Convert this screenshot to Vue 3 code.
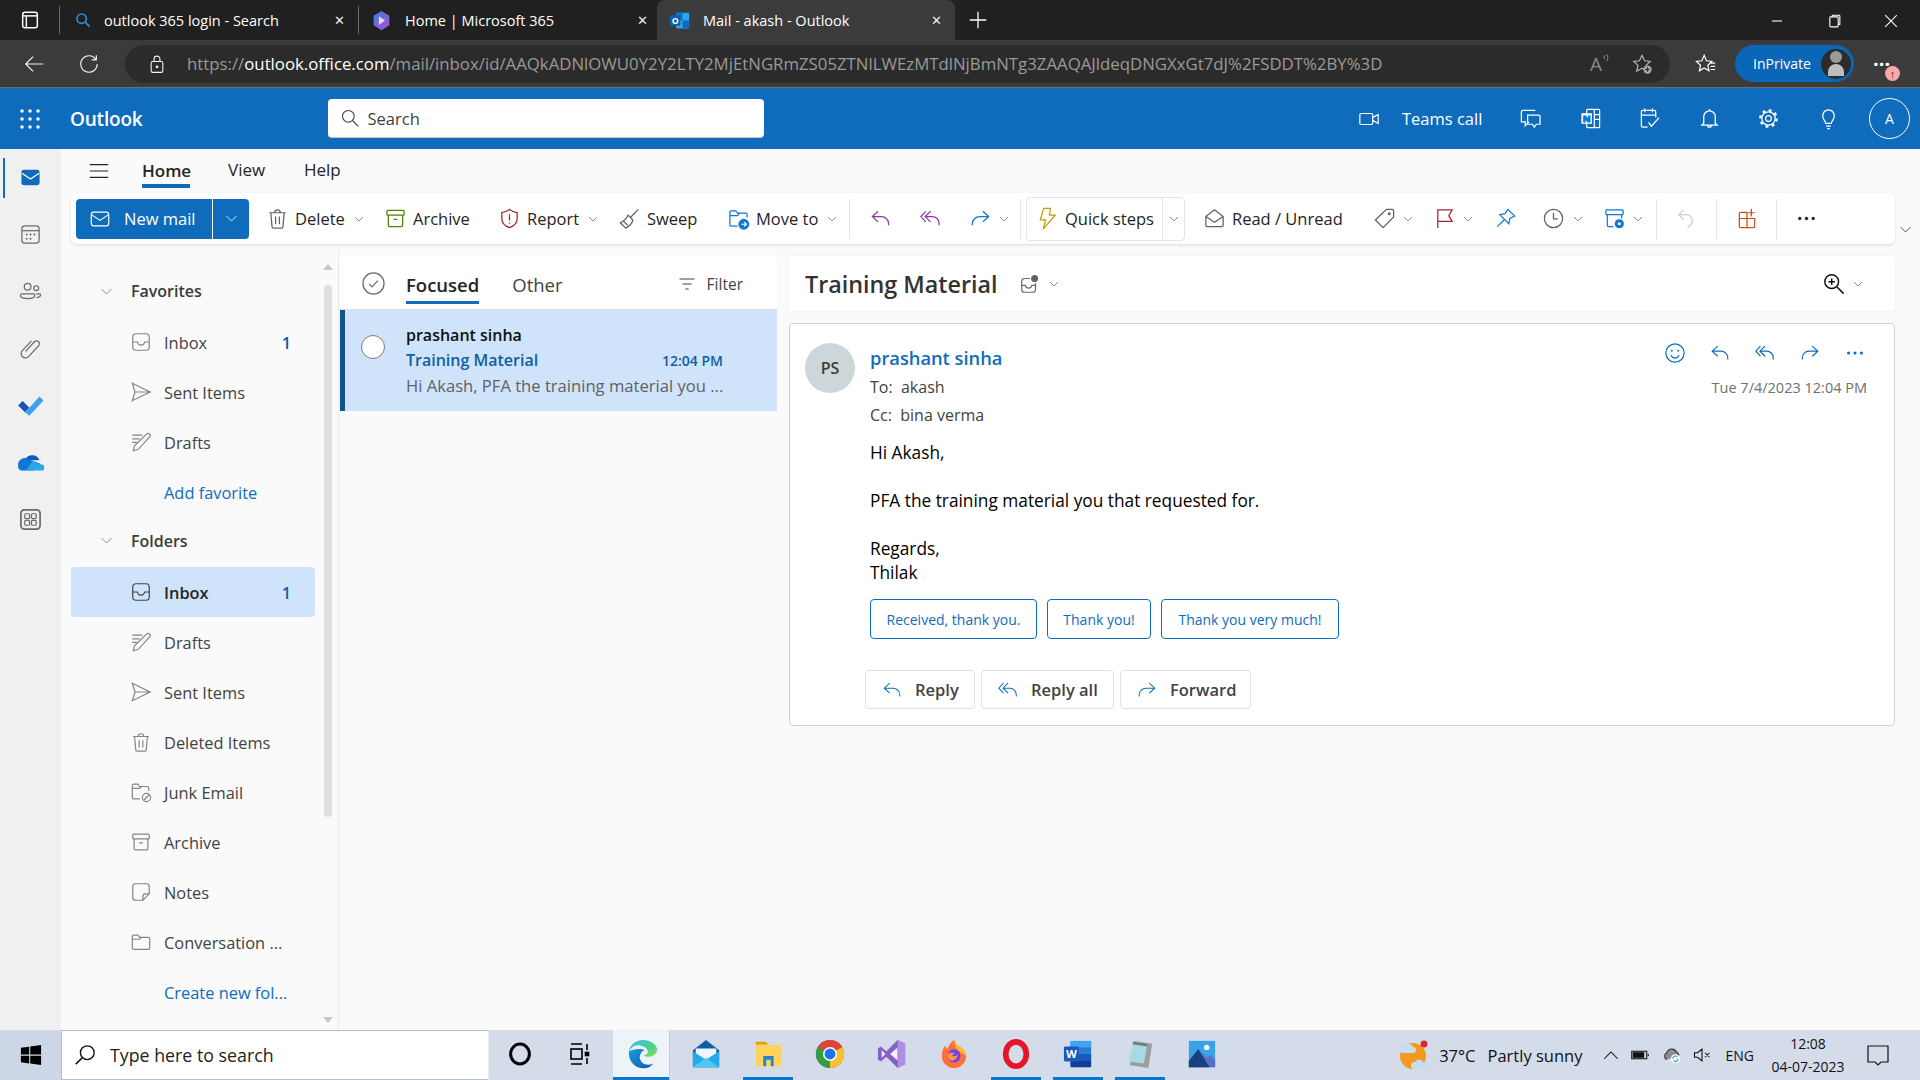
<template>
  <div class="desktop">
    <!-- shared icon sprite -->
    <svg class="sprite" aria-hidden="true">
      <symbol id="chev" viewBox="0 0 24 24"><path d="M4 8l8 8 8-8"/></symbol>
      <symbol id="reply" viewBox="0 0 24 24"><path d="M9.500 4.500L3.500 10l6 5.500M3.500 10H13a7.500 7.500 0 0 1 7.500 7.500v1.500"/></symbol>
      <symbol id="replyall" viewBox="0 0 24 24"><path d="M7 4.500L2 10l5 5.500M12 4.500L6.500 10l5.500 5.500M6.500 10H14a7 7 0 0 1 7 7v2"/></symbol>
      <symbol id="forward" viewBox="0 0 24 24"><path d="M14.500 4.500l6 5.500-6 5.500M20.500 10H11a7.500 7.500 0 0 0-7.500 7.500v1.500"/></symbol>
      <symbol id="mail" viewBox="0 0 24 24"><rect x="2.500" y="4.500" width="19" height="15" rx="2.500"/><path d="M3 7.500l9 6 9-6"/></symbol>
      <symbol id="trash" viewBox="0 0 24 24"><path d="M3.500 6h17M9 6a3 3 0 0 1 6 0M5 6l1.300 14.500A1.500 1.500 0 0 0 7.800 22h8.400a1.500 1.500 0 0 0 1.500-1.500L19 6M10 10v8M14 10v8"/></symbol>
      <symbol id="archive" viewBox="0 0 24 24"><rect x="3" y="3.500" width="18" height="5" rx="1"/><path d="M4.500 8.500V19A1.500 1.500 0 0 0 6 20.500h12a1.500 1.500 0 0 0 1.500-1.500V8.500M10 13h4"/></symbol>
      <symbol id="shield" viewBox="0 0 24 24"><path d="M12 2.500C9.500 4.800 7 5.500 4 5.800V12c0 5 3.500 8 8 9.500 4.500-1.500 8-4.500 8-9.500V5.800c-3-.3-5.500-1-8-3.300zM12 7.500v6.500M12 16.300v1.200"/></symbol>
      <symbol id="broom" viewBox="0 0 24 24"><path d="M21 2.500l-8 8.500M10.500 8.500l5 5c-.5 3-3.500 6.500-7.500 8.500l-5.500-5.500c3.500-2 6.500-4.500 8-8zM6 15l4 4"/></symbol>
      <symbol id="bolt" viewBox="0 0 24 24"><path d="M15 1.500H8L4.500 13.500H10L7.500 23 20 8.500h-6z"/></symbol>
      <symbol id="envopen" viewBox="0 0 24 24"><path d="M3 10l9-7 9 7v9a1.500 1.500 0 0 1-1.500 1.500h-15A1.500 1.500 0 0 1 3 19zM3 10l9 6 9-6"/></symbol>
      <symbol id="tag" viewBox="0 0 24 24"><path d="M14 2.500h6a1.500 1.500 0 0 1 1.500 1.500v6.500L10.500 21.500 2.500 13.500z"/><circle cx="17" cy="7" r="1"/></symbol>
      <symbol id="flag" viewBox="0 0 24 24"><path d="M5 22V3h15l-3.500 6 3.500 6H5"/></symbol>
      <symbol id="pin" viewBox="0 0 24 24"><path d="M14.500 2.500l7 7-5 2.500-1 5.500-9.500-9.500 5.500-1zM10.500 13.500L3.500 20.500"/></symbol>
      <symbol id="clock" viewBox="0 0 24 24"><circle cx="12" cy="12" r="9.500"/><path d="M12 6v6.500h4.500"/></symbol>
      <symbol id="undo" viewBox="0 0 24 24"><path d="M9 3L4 8l5 5M4 8h8a6 6 0 0 1 6 6c0 3-2 5.500-5 7.500"/></symbol>
      <symbol id="apps" viewBox="0 0 24 24"><path d="M12 5.500H5A1.500 1.500 0 0 0 3.500 7v13A1.500 1.500 0 0 0 5 21.500h13a1.500 1.500 0 0 0 1.500-1.500v-8H3.500M11.500 5.500v16M16 2v8M12.500 6h7"/></symbol>
      <symbol id="dots" viewBox="0 0 24 24"><circle cx="5" cy="12" r="1.700" class="solid"/><circle cx="12" cy="12" r="1.700" class="solid"/><circle cx="19" cy="12" r="1.700" class="solid"/></symbol>
      <symbol id="smile" viewBox="0 0 24 24"><circle cx="12" cy="12" r="10"/><path d="M7.500 14.500c1 2 2.700 3 4.500 3s3.500-1 4.500-3"/><circle cx="8.500" cy="9.500" r="1" class="solid"/><circle cx="15.500" cy="9.500" r="1" class="solid"/></symbol>
      <symbol id="inbox" viewBox="0 0 24 24"><rect x="3" y="3" width="18" height="18" rx="3.500"/><path d="M3 12h5c.5 2.500 2 3.500 4 3.500s3.500-1 4-3.500h5"/></symbol>
      <symbol id="send" viewBox="0 0 24 24"><path d="M2.500 2.500L22 12 2.500 21.500 5.500 12zM5.500 12H22"/></symbol>
      <symbol id="draft" viewBox="0 0 24 24"><path d="M2.500 4.500h11M2.500 8.500h8M2.500 12.500h5M18 3.500a2.300 2.300 0 0 1 3.500 3L9 20l-5.500 1.500L5 16z"/></symbol>
      <symbol id="junk" viewBox="0 0 24 24"><path d="M11 19.500H4A1.500 1.500 0 0 1 2.500 18V5A1.500 1.500 0 0 1 4 3.500h4.500l2 2.500H19A1.500 1.500 0 0 1 20.500 7.500V11M2.500 8h8l2-2"/><circle cx="18" cy="18" r="4.500"/><path d="M15 21l6-6"/></symbol>
      <symbol id="note" viewBox="0 0 24 24"><path d="M21 14V6a3 3 0 0 0-3-3H6a3 3 0 0 0-3 3v12a3 3 0 0 0 3 3h8zM14 21v-4a3 3 0 0 1 3-3h4"/></symbol>
      <symbol id="folder" viewBox="0 0 24 24"><path d="M2.500 8V6A1.500 1.500 0 0 1 4 4.500h4.500l2 2.500H20A1.500 1.500 0 0 1 21.500 8.500V18.500A1.500 1.500 0 0 1 20 20H4A1.500 1.500 0 0 1 2.500 18.500zM2.500 9h8l2-2"/></symbol>
      <symbol id="search" viewBox="0 0 24 24"><circle cx="10" cy="10" r="7"/><path d="M15 15l7 7"/></symbol>
      <symbol id="people" viewBox="0 0 24 24"><circle cx="9" cy="7" r="3.500"/><circle cx="18" cy="8.500" r="2.500"/><path d="M3 14.500h12a1.500 1.500 0 0 1 1.500 1.500c0 2.500-3 3.500-7.500 3.500S1.500 18.500 1.500 16A1.500 1.500 0 0 1 3 14.500zM18 14.500h3.500a1 1 0 0 1 1 1c0 1.800-1.800 2.800-4.500 2.800"/></symbol>
      <symbol id="clip" viewBox="0 0 24 24"><path d="M7 15l9-10a3 3 0 0 1 4.500 4L10 20.500a4.500 4.500 0 0 1-6.500-6.300L13 4"/></symbol>
      <symbol id="cal" viewBox="0 0 24 24"><rect x="3" y="3" width="18" height="18" rx="3"/><path d="M3 8h18"/><g class="solid"><circle cx="8" cy="12" r="1"/><circle cx="12" cy="12" r="1"/><circle cx="16" cy="12" r="1"/><circle cx="8" cy="16.500" r="1"/><circle cx="12" cy="16.500" r="1"/></g></symbol>
      <symbol id="video" viewBox="0 0 24 24"><rect x="2" y="6" width="14" height="12" rx="1.500"/><path d="M16 10.500l6-3.500v10l-6-3.500"/></symbol>
      <symbol id="chat" viewBox="0 0 24 24"><path d="M17 3.500H4A1.500 1.500 0 0 0 2.500 5v10.500h4v4l4-4M9 8.500h11.500A1.500 1.500 0 0 1 22 10v8h-4l-2 3-2-3H9z"/></symbol>
      <symbol id="plan" viewBox="0 0 24 24"><path d="M10 21H5A1.500 1.500 0 0 1 3.500 19.500V5A1.500 1.500 0 0 1 5 3.500h12A1.500 1.500 0 0 1 18.500 5v6M3.500 8.500h15M7 1.500v4M15 1.500v4M11 16l3 4 8-9"/></symbol>
      <symbol id="bell" viewBox="0 0 24 24"><path d="M6 10a6 6 0 0 1 12 0v7l2 2H4l2-2zM10 19a2 2 0 0 0 4 0M12 2v2"/></symbol>
      <symbol id="gear" viewBox="0 0 24 24"><circle cx="12" cy="12" r="8.500" class="teeth"/><circle cx="12" cy="12" r="7"/><circle cx="12" cy="12" r="3"/></symbol>
      <symbol id="bulb" viewBox="0 0 24 24"><path d="M9 17c0-2.500-3-3.500-3-8a6 6 0 0 1 12 0c0 4.500-3 5.500-3 8zM9.500 20h5M10.500 22.500h3"/></symbol>
    </svg>

    <div class="tabstrip">
      <svg class="ic panel" viewBox="0 0 24 24"><rect x="4" y="3.500" width="16" height="17" rx="2.500"/><path d="M4 7.500h16" /><path d="M8 7.500v13"/></svg>
      <span class="tab-sep"></span>
      <div class="tab first">
        <svg class="ic bing" viewBox="0 0 24 24"><use href="#search"/></svg>
        <span class="tab-title">outlook 365 login - Search</span>
        <span class="tab-x">✕</span>
      </div>
      <span class="tab-sep short"></span>
      <div class="tab second">
        <svg class="tab-logo" viewBox="0 0 24 24"><defs><linearGradient id="m365" x1="0" y1="0" x2="1" y2="1"><stop offset="0" stop-color="#3a7fe0"/><stop offset="1" stop-color="#b04fd0"/></linearGradient></defs><path d="M12 1l9 5.500v11L12 23l-9-5.500v-11z" fill="url(#m365)"/><path d="M9 7l7 5-7 5z" fill="#e7d9f7"/></svg>
        <span class="tab-title">Home | Microsoft 365</span>
        <span class="tab-x">✕</span>
      </div>
      <div class="tab active">
        <svg class="tab-logo" viewBox="0 0 24 24"><rect x="8" y="3" width="15" height="18" rx="1.500" fill="#28a8ea"/><rect x="8" y="3" width="7.500" height="9" fill="#0078d4"/><rect x="15.500" y="12" width="7.500" height="9" fill="#0f6cbd"/><rect x="1" y="6" width="12" height="12" rx="1.500" fill="#0f5fa8"/><text x="7" y="15.500" class="svg-letter" font-size="10">O</text></svg>
        <span class="tab-title">Mail - akash - Outlook</span>
        <span class="tab-x">✕</span>
      </div>
      <svg class="ic newtab" viewBox="0 0 24 24"><path d="M12 3v18M3 12h18"/></svg>
      <div class="winctl">
        <svg class="ic" viewBox="0 0 24 24"><path d="M6 12h12"/></svg>
        <svg class="ic" viewBox="0 0 24 24"><rect x="7" y="7" width="10" height="12" rx="1"/><path d="M10 7V5h8a1 1 0 0 1 1 1v10h-2"/></svg>
        <svg class="ic" viewBox="0 0 24 24"><path d="M5 5l14 14M19 5L5 19"/></svg>
      </div>
    </div>

    <div class="addressbar">
      <svg class="ic back" viewBox="0 0 24 24"><path d="M11 4l-8 8 8 8M3 12h19"/></svg>
      <svg class="ic reload" viewBox="0 0 24 24"><path d="M19.500 7A9 9 0 1 0 21 12M20 2.500V7.500H15"/></svg>
      <div class="urlpill">
        <svg class="ic lock" viewBox="0 0 24 24"><rect x="5" y="9" width="14" height="13" rx="2"/><path d="M8.500 9V6a3.500 3.500 0 0 1 7 0v3"/><circle cx="12" cy="15.500" r="1" fill="currentColor"/></svg>
        <span class="url"><span>https://</span><b>outlook.office.com</b><span>/mail/inbox/id/AAQkADNlOWU0Y2Y2LTY2MjEtNGRmZS05ZTNlLWEzMTdlNjBmNTg3ZAAQAJldeqDNGXxGt7dJ%2FSDDT%2BY%3D</span></span>
        <span class="aloud">A<svg class="aloud-waves" viewBox="0 0 10 12"><path d="M2 6c1-1 1-3 0-4M5 8c2-2 2-5 0-7"/></svg></span>
        <svg class="ic staradd" viewBox="0 0 24 24"><path d="M12 2.500l2.800 6 6.200.7-4.600 4.300 1.300 6.300-5.700-3.200-5.700 3.200 1.300-6.300L3 9.200l6.200-.7z"/><circle cx="18" cy="18" r="4.500" fill="#aaa" stroke="none"/><path d="M18 15.500v5M15.500 18h5" stroke="#2b2b2b"/></svg>
      </div>
      <svg class="ic favs" viewBox="0 0 24 24"><path d="M10 2.500l2.500 6 6 .7-4.500 4.100 1.200 6.200-5.200-3.100-5.200 3.100L6 13.300 1.500 9.200l6-.7zM17 11h5M17 14.500h5M17 18h5"/></svg>
      <div class="inprivate">
        <span>InPrivate</span>
        <span class="inprivate-pic"><i></i><i></i></span>
      </div>
      <div class="more-wrap">
        <span class="more-dots">···</span>
        <span class="update-dot">↑</span>
      </div>
    </div>

    <header class="o-header">
      <svg class="waffle" viewBox="0 0 20 20"><g fill="#fff"><circle v-for="p in wafflePts" :key="p[0] + '-' + p[1]" :cx="p[0]" :cy="p[1]" r="1.700"/></g></svg>
      <span class="brand">Outlook</span>
      <div class="searchbox">
        <svg class="ic" viewBox="0 0 24 24"><use href="#search"/></svg>
        <span>Search</span>
      </div>
      <div class="hdr-right">
        <svg class="ic" viewBox="0 0 24 24"><use href="#video"/></svg>
        <span class="teams">Teams call</span>
        <div class="hdr-cell"><svg class="ic" viewBox="0 0 24 24"><use href="#chat"/></svg></div>
        <div class="hdr-cell">
          <svg class="ic" viewBox="0 0 24 24"><rect x="8" y="2.500" width="13.500" height="19" rx="1"/><path d="M16 2.500v19M16 8h5.500M16 13h5.500"/><rect x="2.500" y="6.500" width="11" height="11" fill="#fff" stroke="none"/><text x="8" y="15.500" class="svg-letter blue" font-size="10">N</text></svg>
        </div>
        <div class="hdr-cell"><svg class="ic" viewBox="0 0 24 24"><use href="#plan"/></svg></div>
        <div class="hdr-cell"><svg class="ic" viewBox="0 0 24 24"><use href="#bell"/></svg></div>
        <div class="hdr-cell"><svg class="ic" viewBox="0 0 24 24"><use href="#gear"/></svg></div>
        <div class="hdr-cell"><svg class="ic" viewBox="0 0 24 24"><use href="#bulb"/></svg></div>
        <div class="me">A</div>
      </div>
    </header>

    <div class="o-main">
      <nav class="rail">
        <div class="rail-item current">
          <svg viewBox="0 0 24 24"><rect x="2.500" y="4" width="19" height="16" rx="2.500" fill="#0f6cbd"/><path d="M3 7.500l9 6 9-6" fill="none" stroke="#fff" stroke-width="1.400"/></svg>
        </div>
        <div class="rail-item"><svg class="ic" viewBox="0 0 24 24"><use href="#cal"/></svg></div>
        <div class="rail-item"><svg class="ic" viewBox="0 0 24 24"><use href="#people"/></svg></div>
        <div class="rail-item"><svg class="ic" viewBox="0 0 24 24"><use href="#clip"/></svg></div>
        <div class="rail-item big">
          <svg viewBox="0 0 24 24"><path d="M1 12l4-4 6 6-4 4z" fill="#1c52b8"/><path d="M7 18l4-4 9-10 3.500 3.500L11 21z" fill="#3f9ff0"/></svg>
        </div>
        <div class="rail-item big">
          <svg viewBox="0 0 24 24"><path d="M7 10a7 7 0 0 1 13 0z" fill="#0a5cb8"/><path d="M1 15a6 6 0 0 1 9-6l11 4-6 6H4a4 4 0 0 1-3-4z" fill="#0f78d4"/><path d="M8 19h13.500a2.500 2.500 0 0 0 1-5l-9-3z" fill="#28a8ea"/></svg>
        </div>
        <div class="rail-item">
          <svg class="ic" viewBox="0 0 24 24"><rect x="2" y="2" width="20" height="20" rx="3.500" stroke-width="1.800"/><rect x="6" y="6" width="5" height="5" rx="1"/><rect x="13" y="6" width="5" height="5" rx="1"/><rect x="6" y="13" width="5" height="5" rx="1"/><rect x="13" y="13" width="5" height="5" rx="1"/></svg>
        </div>
      </nav>

      <div class="content">
        <div class="ribbon-tabs">
          <svg class="ic menu" viewBox="0 0 24 24"><path d="M2 5h20M2 12h20M2 19h20"/></svg>
          <span class="rtab selected">Home</span>
          <span class="rtab">View</span>
          <span class="rtab">Help</span>
        </div>

        <div class="toolbar-row">
          <div class="toolbar">
            <div class="newmail">
              <div class="newmail-main">
                <svg class="ic" viewBox="0 0 24 24"><use href="#mail"/></svg>
                <span>New mail</span>
              </div>
              <div class="newmail-more"><svg class="ic" viewBox="0 0 24 24"><use href="#chev"/></svg></div>
            </div>

            <template v-for="t in toolsA" :key="t.id">
              <div class="tool" :class="{ divider: t.div }" :style="{ width: t.w + 'px', paddingRight: (t.pr || 0) + 'px' }">
                <template v-if="!t.div">
                  <svg v-if="t.id === 'move'" class="ic tool-ic blue" viewBox="0 0 24 24"><path d="M3 8V5.500A1.500 1.500 0 0 1 4.500 4H9l2 2.500h8.500A1.500 1.500 0 0 1 21 8v3M3 8v10.500A1.500 1.500 0 0 0 4.500 20H11M3 9h8l2-2.500"/><circle cx="17.500" cy="18" r="5" fill="currentColor"/><path d="M15 18h5M18 15.800l2.200 2.200-2.200 2.200" stroke="#fff"/></svg>
                  <svg v-else class="ic tool-ic" :class="t.cls" viewBox="0 0 24 24"><use :href="'#' + t.icon"/></svg>
                  <span v-if="t.label" class="tool-label">{{ t.label }}</span>
                  <svg v-if="t.chev" class="ic tool-chev" viewBox="0 0 24 24"><use href="#chev"/></svg>
                </template>
              </div>
            </template>

            <div class="quick">
              <svg class="ic tool-ic gold" viewBox="0 0 24 24"><use href="#bolt"/></svg>
              <span class="tool-label">Quick steps</span>
              <div class="quick-more"><svg class="ic tool-chev" viewBox="0 0 24 24"><use href="#chev"/></svg></div>
            </div>

            <template v-for="t in toolsB" :key="t.id">
              <div class="tool" :class="{ divider: t.div }" :style="{ width: t.w + 'px', paddingRight: (t.pr || 0) + 'px' }">
                <template v-if="!t.div">
                  <svg v-if="t.id === 'rules'" class="ic tool-ic blue" viewBox="0 0 24 24"><rect x="3" y="3" width="18" height="5" rx="1"/><path d="M4.500 8v11A1.500 1.500 0 0 0 6 20.500h5M19.500 8v4M8 12.500h.1M8 16h.1"/><circle cx="17" cy="17.500" r="4.800" fill="currentColor" stroke="none"/><circle cx="17" cy="17.500" r="1.600" fill="#fff" stroke="none"/></svg>
                  <svg v-else class="ic tool-ic" :class="t.cls" viewBox="0 0 24 24"><use :href="'#' + t.icon"/></svg>
                  <span v-if="t.label" class="tool-label">{{ t.label }}</span>
                  <svg v-if="t.chev" class="ic tool-chev" viewBox="0 0 24 24"><use href="#chev"/></svg>
                </template>
              </div>
            </template>
          </div>
          <svg class="ic ribbon-toggle" viewBox="0 0 24 24"><use href="#chev"/></svg>
        </div>

        <div class="panes">
          <aside class="nav">
            <div class="tree">
              <div class="tree-head first">
                <svg class="ic" viewBox="0 0 24 24"><use href="#chev"/></svg>
                <span>Favorites</span>
              </div>
              <div v-for="f in favorites" :key="f.name" class="tree-row">
                <svg class="ic" viewBox="0 0 24 24"><use :href="'#' + f.icon"/></svg>
                <span class="tree-name">{{ f.name }}</span>
                <span v-if="f.count" class="tree-count">{{ f.count }}</span>
              </div>
              <div class="tree-row link"><span class="tree-name">Add favorite</span></div>

              <div class="tree-head second">
                <svg class="ic" viewBox="0 0 24 24"><use href="#chev"/></svg>
                <span>Folders</span>
              </div>
              <div v-for="f in folders" :key="f.name" class="tree-row" :class="{ active: f.active }">
                <svg class="ic" viewBox="0 0 24 24"><use :href="'#' + f.icon"/></svg>
                <span class="tree-name">{{ f.name }}</span>
                <span v-if="f.count" class="tree-count">{{ f.count }}</span>
              </div>
              <div class="tree-row link"><span class="tree-name">Create new fol...</span></div>
            </div>
            <div class="scrollbar">
              <span class="arrow up"></span>
              <span class="thumb"></span>
              <span class="arrow down"></span>
            </div>
          </aside>

          <section class="list">
            <div class="list-head">
              <svg class="ic selectall" viewBox="0 0 24 24"><circle cx="12" cy="12" r="11"/><path d="M7.500 12.500l3 3 6-6.500"/></svg>
              <span class="pivot on">Focused</span>
              <span class="pivot">Other</span>
              <div class="filter">
                <svg class="ic" viewBox="0 0 24 24"><path d="M3 6h18M6.500 12h11M10 18h4"/></svg>
                <span>Filter</span>
              </div>
            </div>
            <div class="msg">
              <span class="msg-radio"></span>
              <div class="msg-text">
                <div class="msg-from">prashant sinha</div>
                <div class="msg-line">
                  <span class="msg-subject">Training Material</span>
                  <span class="msg-time">12:04 PM</span>
                </div>
                <div class="msg-preview">Hi Akash, PFA the training material you ...</div>
              </div>
            </div>
          </section>

          <section class="reading">
            <div class="subject-card">
              <h1>Training Material</h1>
              <svg class="ic subj-ic" viewBox="0 0 24 24"><rect x="3" y="6" width="15" height="15" rx="3"/><path d="M3 13.500h4c.5 2 1.500 3 3.500 3s3-1 3.500-3h4"/><circle cx="17" cy="6" r="4.500" fill="#616161" stroke="#fff"/></svg>
              <svg class="ic small-chev" viewBox="0 0 24 24"><use href="#chev"/></svg>
              <svg class="ic zoomer" viewBox="0 0 24 24"><circle cx="9.500" cy="9.500" r="7.500"/><path d="M15 15l7.500 7.500M9.500 6v7M6 9.500h7"/></svg>
              <svg class="ic small-chev" viewBox="0 0 24 24"><use href="#chev"/></svg>
            </div>

            <article class="mail-card">
              <div class="avatar">PS</div>
              <div class="mail-col">
                <div class="mail-row">
                  <span class="sender">prashant sinha</span>
                  <div class="mail-actions">
                    <svg v-for="a in mailActions" :key="a" class="ic" viewBox="0 0 24 24"><use :href="'#' + a"/></svg>
                  </div>
                </div>
                <div class="mail-row meta to">
                  <span>To:&nbsp; akash</span>
                  <span class="date">Tue 7/4/2023 12:04 PM</span>
                </div>
                <div class="mail-row meta"><span>Cc:&nbsp; bina verma</span></div>

                <div class="mail-body">
                  <p>Hi Akash,</p>
                  <p>&nbsp;</p>
                  <p>PFA the training material you that requested for.</p>
                  <p>&nbsp;</p>
                  <p>Regards,</p>
                  <p>Thilak</p>
                </div>

                <div class="suggestions">
                  <button v-for="s in suggestions" :key="s.text" type="button" :style="{ width: s.w + 'px' }">{{ s.text }}</button>
                </div>

                <div class="replies">
                  <button v-for="r in replies" :key="r.text" type="button" :style="{ width: r.w + 'px' }">
                    <svg class="ic" viewBox="0 0 24 24"><use :href="'#' + r.icon"/></svg>
                    {{ r.text }}
                  </button>
                </div>
              </div>
            </article>
          </section>
        </div>
      </div>
    </div>

    <footer class="taskbar">
      <div class="start">
        <svg viewBox="0 0 24 24" fill="#000"><path d="M1 4.200l9-1.300v8.600H1zM11.200 2.700L23 1v10.500H11.200zM1 12.700h9v8.500l-9-1.300zM11.200 12.700H23V23l-11.800-1.700z"/></svg>
      </div>
      <div class="ts-search">
        <svg class="ic" viewBox="0 0 24 24"><circle cx="14.500" cy="9.500" r="7.500"/><path d="M9 15l-7 7" stroke-width="1.800"/></svg>
        <span>Type here to search</span>
      </div>

      <div class="tb-cell">
        <span class="tb-icon"><svg viewBox="0 0 24 24"><ellipse cx="12" cy="12" rx="7.500" ry="8" fill="none" stroke="#000" stroke-width="2.400"/></svg></span>
        <i class="tb-bar off"></i>
      </div>
      <div class="tb-cell taskview">
        <span class="tb-icon"><svg viewBox="0 0 24 24" fill="none" stroke="#000" stroke-width="1.600"><path d="M3 2h11M3 22h11"/><rect x="3" y="7" width="11" height="10"/><path d="M19 2v6M19 16v6"/><rect x="17.500" y="10.500" width="3" height="3" fill="#000"/></svg></span>
        <i class="tb-bar off"></i>
      </div>
      <div class="tb-cell edge">
        <span class="tb-icon">
          <svg viewBox="0 0 32 32"><defs><linearGradient id="edgeA" x1="0" y1="0" x2="1" y2="1"><stop offset="0" stop-color="#35c1f1"/><stop offset=".6" stop-color="#4fd08a"/><stop offset="1" stop-color="#7fe35a"/></linearGradient><linearGradient id="edgeB" x1="0" y1="0" x2="1" y2="1"><stop offset="0" stop-color="#1b9de2"/><stop offset="1" stop-color="#0c59a4"/></linearGradient></defs><path d="M16 1C8 1 2 6.500 1 13c3-5 8-7 12-6 6 1 9 5 8 8-.5 2-3 2-4 2 2 3 9 3 13-2 1-2 1-3 1-4C31 6 24 1 16 1z" fill="url(#edgeA)"/><path d="M1 13c-1 9 5 17 13 18 5 1 10-1 13-5-4 2-9 2-12-1-3-3-3-7-1-10 1-2 3-3 4-3-6-3-14 0-17 1z" fill="url(#edgeB)"/></svg>
        </span>
        <i class="tb-bar"></i>
      </div>
      <div class="tb-cell">
        <span class="tb-icon">
          <svg viewBox="0 0 32 32"><path d="M2 12L16 1l14 11v18H2z" fill="#0f5fa8"/><path d="M5 10h22v6l-11 7-11-7z" fill="#eef6fc"/><path d="M2 13l14 9 14-9v17H2z" fill="#28a8ea"/><path d="M2 30l14-10 14 10z" fill="#50c8f5"/></svg>
        </span>
        <i class="tb-bar off"></i>
      </div>
      <div class="tb-cell">
        <span class="tb-icon">
          <svg viewBox="0 0 32 32"><path d="M3 3h11l2 3H3z" fill="#e0a100"/><rect x="3" y="6" width="27" height="23" rx="1" fill="#ffd35c"/><path d="M11 29V18h11v11h-3v-7h-5v7z" fill="#1f86d6"/></svg>
        </span>
        <i class="tb-bar"></i>
      </div>
      <div class="tb-cell">
        <span class="tb-icon">
          <svg viewBox="0 0 32 32"><circle cx="16" cy="16" r="15" fill="#db4437"/><path d="M16 16L3 8.500A15 15 0 0 0 16 31z" fill="#2f9e44"/><path d="M16 16v15A15 15 0 0 0 29 8.500z" fill="#fbc02d"/><path d="M3 8.500A15 15 0 0 1 29 8.500H16z" fill="#db4437"/><circle cx="16" cy="16" r="7.500" fill="#fff"/><circle cx="16" cy="16" r="5.800" fill="#1a73e8"/></svg>
        </span>
        <i class="tb-bar off"></i>
      </div>
      <div class="tb-cell">
        <span class="tb-icon">
          <svg viewBox="0 0 32 32"><path d="M22 1l8 4v22l-8 4L10 19l-6 5-3-2V10l3-2 6 5z" fill="#8661c5"/><path d="M22 9v14l-8-7z" fill="#f5f0fb"/><path d="M22 1l8 4v22l-8 4z" fill="#b18ee6"/><path d="M5 12v8l4-4z" fill="#f5f0fb"/></svg>
        </span>
        <i class="tb-bar off"></i>
      </div>
      <div class="tb-cell">
        <span class="tb-icon">
          <svg viewBox="0 0 32 32"><path d="M16 1c2 3 2 5 6 7 5 3 7 7 7 10 0 7-6 13-13 13S3 25 3 18c0-4 1-8 4-11 0 2 1 3 2 4 1-4 3-7 7-10z" fill="#ff7139"/><path d="M16 1c2 3 2 5 6 7 5 3 7 7 7 10l-9-6c-2-4-4-7-4-11z" fill="#ffbd2e"/><circle cx="16" cy="18" r="7" fill="#7542e5"/><path d="M9 17c2-3 6-3 8-1-2 0-3 1-3 2 3 1 5 0 6-2 0 4-3 7-6 7-3 0-5-3-5-6z" fill="#ff9640"/></svg>
        </span>
        <i class="tb-bar off"></i>
      </div>
      <div class="tb-cell">
        <span class="tb-icon">
          <svg viewBox="0 0 32 32"><ellipse cx="16" cy="16" rx="11" ry="13" fill="none" stroke="#e3152a" stroke-width="6"/></svg>
        </span>
        <i class="tb-bar"></i>
      </div>
      <div class="tb-cell">
        <span class="tb-icon">
          <svg viewBox="0 0 32 32"><rect x="8" y="2" width="22" height="28" rx="1.500" fill="#2b7cd3"/><rect x="8" y="2" width="22" height="7" fill="#41a5ee"/><rect x="8" y="16" width="22" height="7" fill="#185abd"/><rect x="8" y="23" width="22" height="7" fill="#103f91"/><rect x="1" y="8" width="16" height="16" rx="1.500" fill="#185abd"/><text x="9" y="20.500" class="svg-letter" font-size="12">W</text></svg>
        </span>
        <i class="tb-bar"></i>
      </div>
      <div class="tb-cell">
        <span class="tb-icon">
          <svg viewBox="0 0 32 32"><path d="M10 2l19 3-4 26L5 28z" fill="#9a9f9f"/><path d="M9 3l15 2-4 21L4 24z" fill="#a6dbe6"/><path d="M8.500 3l15.500 2-.5 3L8 5.500z" fill="#6e7c80"/></svg>
        </span>
        <i class="tb-bar"></i>
      </div>
      <div class="tb-cell">
        <span class="tb-icon">
          <svg viewBox="0 0 32 32"><rect x="2" y="2" width="28" height="28" fill="#3aa3e8"/><path d="M2 22l10-11 9 9 4-3 5 6v7H2z" fill="#5c6fc4"/><path d="M2 24l10-13 12 19H2z" fill="#16407e"/><circle cx="21" cy="9" r="2.800" fill="#fff"/></svg>
        </span>
        <i class="tb-bar off"></i>
      </div>

      <div class="tray">
        <svg class="weather" viewBox="0 0 32 32"><circle cx="16" cy="17" r="13" fill="#f29a1f"/><circle cx="27" cy="5" r="3.500" fill="#d62b2b"/><path d="M3 11a4 4 0 0 1 4-4 5 5 0 0 1 9 1 3 3 0 0 1 0 6H5a3 3 0 0 1-2-3z" fill="#c7dcef"/><path d="M14 27a4 4 0 0 1 4-4 5 5 0 0 1 9 1 3 3 0 0 1 0 6H16a3 3 0 0 1-2-3z" fill="#c7dcef"/></svg>
        <span class="temp">37°C</span>
        <span class="sky">Partly sunny</span>
        <svg class="ic tray-chev" viewBox="0 0 24 24"><path d="M3 17l9-9 9 9"/></svg>
        <svg class="ic tray-bat" viewBox="0 0 24 24"><rect x="1" y="7" width="20" height="10"/><rect x="3" y="9" width="14" height="6" fill="currentColor"/><path d="M23 10.500v3"/></svg>
        <svg class="ic tray-cloud" viewBox="0 0 24 24"><path d="M5 18a5 5 0 0 1 0-9 7 7 0 0 1 13-1 5 5 0 0 1 3 5" fill="#8c8c8c"/><circle cx="16.500" cy="17" r="6" fill="#fff" stroke="none"/><path d="M13 17a3.500 3.500 0 0 1 6-2.500M20 17a3.500 3.500 0 0 1-6 2.500" stroke="#1f86d6"/></svg>
        <svg class="ic tray-vol" viewBox="0 0 24 24"><path d="M2 9h4l6-5v16l-6-5H2zM16 9l6 6M22 9l-6 6"/></svg>
        <span class="lang">ENG</span>
        <div class="clock"><span>12:08</span><span>04-07-2023</span></div>
        <svg class="ic tray-notif" viewBox="0 0 24 24"><path d="M2 3h20v16h-7l-3 3-3-3H2z"/></svg>
      </div>
    </footer>
  </div>
</template>

<script setup>
const wafflePts = []
for (const x of [2, 10, 18]) {
  for (const y of [2, 10, 18]) wafflePts.push([x, y])
}

// widths come from the gaps between the toolbar buttons
const toolsA = [
  { id: 'delete', icon: 'trash', cls: 'grey', label: 'Delete', w: 118, chev: true, pr: 19 },
  { id: 'archive', icon: 'archive', cls: 'green', label: 'Archive', w: 114 },
  { id: 'report', icon: 'shield', cls: 'red', label: 'Report', w: 120, chev: true, pr: 19 },
  { id: 'sweep', icon: 'broom', cls: 'grey', label: 'Sweep', w: 109 },
  { id: 'move', label: 'Move to', w: 122, chev: true, pr: 11 },
  { id: 'd1', div: true, w: 20 },
  { id: 'reply', icon: 'reply', cls: 'purple', w: 50 },
  { id: 'replyall', icon: 'replyall', cls: 'purple', w: 50 },
  { id: 'forward', icon: 'forward', cls: 'blue', w: 51, chev: true, pr: 10 },
  { id: 'd2', div: true, w: 6 }
]

const toolsB = [
  { id: 'read', icon: 'envopen', cls: 'grey', label: 'Read / Unread', w: 170 },
  { id: 'tag', icon: 'tag', cls: 'grey', w: 60, chev: true, pr: 21 },
  { id: 'flag', icon: 'flag', cls: 'red', w: 61, chev: true, pr: 20 },
  { id: 'pin', icon: 'pin', cls: 'blue', w: 48 },
  { id: 'clock', icon: 'clock', cls: 'grey', w: 61, chev: true, pr: 19 },
  { id: 'rules', w: 53, chev: true, pr: 12 },
  { id: 'd3', div: true, w: 19 },
  { id: 'undo', icon: 'undo', cls: 'faint', w: 41 },
  { id: 'd4', div: true, w: 20 },
  { id: 'apps', icon: 'apps', cls: 'orange', w: 40 },
  { id: 'd5', div: true, w: 19 },
  { id: 'dots', icon: 'dots', cls: 'dark', w: 24 }
]

const favorites = [
  { name: 'Inbox', icon: 'inbox', count: 1 },
  { name: 'Sent Items', icon: 'send' },
  { name: 'Drafts', icon: 'draft' }
]

const folders = [
  { name: 'Inbox', icon: 'inbox', count: 1, active: true },
  { name: 'Drafts', icon: 'draft' },
  { name: 'Sent Items', icon: 'send' },
  { name: 'Deleted Items', icon: 'trash' },
  { name: 'Junk Email', icon: 'junk' },
  { name: 'Archive', icon: 'archive' },
  { name: 'Notes', icon: 'note' },
  { name: 'Conversation ...', icon: 'folder' }
]

const mailActions = ['smile', 'reply', 'replyall', 'forward', 'dots']

const suggestions = [
  { text: 'Received, thank you.', w: 167 },
  { text: 'Thank you!', w: 104 },
  { text: 'Thank you very much!', w: 178 }
]

const replies = [
  { text: 'Reply', icon: 'reply', w: 110 },
  { text: 'Reply all', icon: 'replyall', w: 133 },
  { text: 'Forward', icon: 'forward', w: 131 }
]
</script>

<style>
html, body { margin: 0; padding: 0; background: #fafafa; }
.teeth { stroke-width: 2.5; stroke-dasharray: 3 3.67; }
.solid { fill: currentColor; stroke: none; }
</style>

<style scoped>
.desktop {
  width: 1920px;
  height: 1080px;
  overflow: hidden;
  display: grid;
  grid-template-rows: 40px 48px 61px 881px 50px;
  font-family: "Open Sans", "Noto Sans", sans-serif;
  color: #242424;
  background: #fafafa;
}
.sprite { position: absolute; width: 0; height: 0; overflow: hidden; }
.ic { width: 22px; height: 22px; fill: none; stroke: currentColor; stroke-width: 1.3; flex: none; display: block; }
.svg-letter { fill: #fff; font-family: "Open Sans", sans-serif; font-weight: 700; text-anchor: middle; }
.svg-letter.blue { fill: #0f6cbd; }

/* browser chrome */
.tabstrip { background: #202020; display: flex; align-items: flex-end; color: #fff; height: 40px; }
.panel { margin: 0 0 9px 19px; width: 22px; height: 22px; stroke-width: 1.600; }
.tab-sep { width: 1px; height: 28px; background: #6b6b6b; margin: 0 12px 6px 18px; }
.tab-sep.short { margin: 0 0 6px 0; }
.tab { height: 40px; display: flex; align-items: center; font-size: 14.500px; box-sizing: border-box; }
.tab.first { width: 286px; padding: 0 13px 0 3px; }
.tab.second { width: 298px; padding: 0 9px 0 11px; }
.tab .bing { width: 16px; height: 16px; color: #2f8fe8; stroke-width: 2.500; margin-right: 13px; }
.tab-logo { width: 21px; height: 21px; margin: 0 13px 0 1px; flex: none; }
.tab-title { flex: 1; white-space: nowrap; }
.tab-x { font-size: 13px; color: #eee; }
.tab.active { background: #3b3b3b; border-radius: 8px 8px 0 0; width: 298px; padding: 0 13px 0 11px; }
.newtab { width: 22px; height: 22px; margin: 0 0 9px 12px; stroke-width: 1.400; }
.winctl { margin-left: auto; display: flex; gap: 37px; padding: 0 19px 9px 0; }
.winctl .ic { width: 20px; height: 20px; }

.addressbar { background: #3b3b3b; display: flex; align-items: center; border-bottom: 1px solid #6e6e6e; box-sizing: border-box; color: #f2f2f2; }
.back { margin-left: 23px; }
.reload { margin-left: 33px; }
.urlpill { margin-left: 25px; width: 1545px; height: 38px; background: #2b2b2b; border-radius: 19px; display: flex; align-items: center; box-sizing: border-box; }
.lock { margin-left: 22px; width: 20px; height: 20px; }
.url { margin-left: 20px; font-size: 16.800px; color: #9a9a9a; white-space: nowrap; width: 1197px; overflow: hidden; }
.url b { color: #fff; font-weight: 400; }
.aloud { margin-left: 206px; font-size: 19px; color: #8a8a8a; display: flex; align-items: flex-start; }
.aloud-waves { width: 9px; height: 12px; margin-top: 2px; fill: none; stroke: #8a8a8a; stroke-width: 1.200; }
.staradd { margin-left: 20px; color: #b5b5b5; }
.favs { margin-left: 25px; color: #fff; }
.inprivate { margin-left: 18px; width: 119px; height: 37px; border-radius: 19px; background: #0a66b7; display: flex; align-items: center; justify-content: space-between; padding: 0 3px 0 18px; box-sizing: border-box; font-size: 14px; color: #fff; }
.inprivate-pic { width: 30px; height: 30px; border-radius: 50%; background: #2c2c2c; display: flex; flex-direction: column; align-items: center; justify-content: center; gap: 1px; overflow: hidden; }
.inprivate-pic i { display: block; width: 12px; height: 12px; border-radius: 50%; background: #9a9a9a; }
.inprivate-pic i:last-child { width: 16px; background: #bdbdbd; border-radius: 8px 8px 0 0; }
.more-wrap { margin-left: 19px; position: relative; font-size: 20px; font-weight: 700; color: #fff; }
.update-dot { position: absolute; left: 12px; top: 16px; width: 15px; height: 15px; border-radius: 50%; background: #f7a9a9; color: #4a1010; font-size: 11px; line-height: 15px; text-align: center; }

/* outlook header */
.o-header { background: #0f6cbd; display: flex; align-items: center; color: #fff; }
.waffle { width: 20px; height: 20px; margin-left: 20px; }
.brand { margin-left: 30px; font-size: 19px; font-weight: 600; letter-spacing: -0.2px; }
.searchbox { margin-left: 185px; width: 436px; height: 39px; background: #fff; border-radius: 4px; border-bottom: 1px solid #c8c8c8; box-sizing: border-box; display: flex; align-items: center; color: #424242; font-size: 16.500px; padding-left: 12px; gap: 8px; }
.searchbox .ic { width: 20px; height: 20px; }
.hdr-right { margin-left: auto; display: flex; align-items: center; padding-right: 10px; }
.teams { margin-left: 22px; width: 99px; font-size: 16.500px; white-space: nowrap; }
.hdr-cell { width: 59.500px; display: flex; justify-content: center; }
.hdr-cell .ic { width: 23px; height: 23px; }
.me { width: 39px; height: 39px; border: 1px solid #fff; border-radius: 50%; display: grid; place-items: center; font-size: 14px; margin-left: 11px; }

/* main */
.o-main { display: grid; grid-template-columns: 61px 1fr; min-height: 0; }
.rail { background: #f0f0f0; display: flex; flex-direction: column; }
.rail-item { height: 57px; display: grid; place-items: center; color: #6b6b6b; position: relative; }
.rail-item svg { width: 23px; height: 23px; }
.rail-item.big svg { width: 27px; height: 27px; }
.rail-item.current::before { content: ""; position: absolute; left: 3px; top: 9px; bottom: 8px; width: 2px; background: #0f6cbd; }

.content { display: flex; flex-direction: column; min-width: 0; }
.ribbon-tabs { height: 44px; display: flex; align-items: center; padding-left: 27px; font-size: 17px; color: #242424; }
.menu { width: 22px; height: 22px; margin-right: 32px; }
.rtab { height: 44px; line-height: 42px; box-sizing: border-box; width: 46px; margin-right: 30px; white-space: nowrap; }
.rtab.selected { width: 48px; margin-right: 38px; font-weight: 600; border-bottom: 4px solid #0f6cbd; height: 39px; align-self: flex-start; line-height: 44px; }

.toolbar-row { display: flex; align-items: center; padding-left: 10px; height: 51px; }
.toolbar { width: 1824px; height: 51px; background: #fff; border-radius: 6px; box-shadow: 0 1px 3px rgba(0, 0, 0, .12); display: flex; align-items: center; padding-left: 5px; box-sizing: border-box; font-size: 16.500px; color: #242424; }
.ribbon-toggle { width: 15px; height: 15px; margin: 22px 0 0 3px; color: #333; }
.newmail { width: 173px; height: 40px; display: flex; color: #fff; background: #0f6cbd; border-radius: 4px; margin-right: 17px; flex: none; }
.newmail-main { width: 137px; display: flex; align-items: center; padding-left: 13px; gap: 13px; box-sizing: border-box; border-right: 1px solid #fff; }
.newmail-more { flex: 1; display: grid; place-items: center; }
.newmail-more .ic { width: 15px; height: 15px; }
.tool { flex: none; height: 40px; display: flex; align-items: center; box-sizing: border-box; white-space: nowrap; }
.tool.divider { border-left: 1px solid #e4e4e4; }
.tool-ic { margin-right: 6px; width: 23px; height: 23px; }
.tool-label { line-height: 1; padding-top: 1px; }
.tool-chev { width: 12px; height: 12px; margin-left: auto; color: #555; }
.grey { color: #616161; }
.green { color: #498205; }
.red { color: #a4262c; }
.blue { color: #0f78d4; }
.purple { color: #8a3a9e; }
.gold { color: #c19c00; }
.faint { color: #cfcfcf; }
.orange { color: #ca5010; }
.dark { color: #242424; }
.quick { width: 159px; height: 44px; border: 1px solid #e4e4e4; border-radius: 4px; display: flex; align-items: center; box-sizing: border-box; padding-left: 9px; margin-right: 18px; flex: none; white-space: nowrap; }
.quick-more { margin-left: auto; width: 21px; height: 100%; border-left: 1px solid #e4e4e4; display: grid; place-items: center; }
.quick-more .tool-chev { margin: 0; }

.panes { flex: 1; display: flex; min-height: 0; }
.nav { width: 278px; flex: none; display: flex; border-right: 1px solid #ececec; box-sizing: border-box; }
.tree { width: 263px; padding: 23px 0 0 10px; box-sizing: border-box; font-size: 16.400px; color: #424242; }
.tree-head { height: 48px; display: flex; align-items: center; font-weight: 600; padding-left: 28px; gap: 17px; color: #3b3b3b; font-size: 16px; }
.tree-head .ic { width: 15px; height: 15px; color: #777; }
.tree-head.first { margin-bottom: 2px; }
.tree-head.second { height: 50px; padding-bottom: 3px; box-sizing: border-box; }
.tree-row { width: 244px; height: 50px; display: flex; align-items: center; box-sizing: border-box; padding: 0 24px 0 59px; gap: 12px; }
.tree-row .ic { width: 22px; height: 22px; color: #858585; }
.tree-row.active { background: #cfe4fa; border-radius: 4px; font-weight: 600; color: #242424; }
.tree-row.active .ic { color: #424242; }
.tree-name { white-space: nowrap; }
.tree-count { margin-left: auto; color: #115ea3; font-weight: 600; }
.tree-row.link { padding-left: 93px; color: #0f6cbd; }
.scrollbar { width: 8px; display: flex; flex-direction: column; align-items: center; }
.thumb { display: block; width: 8px; height: 532px; margin-top: 15px; background: #e0e0e0; border-radius: 4px; }
.arrow { display: block; width: 0; height: 0; border-left: 5px solid transparent; border-right: 5px solid transparent; }
.arrow.up { border-bottom: 6px solid #c8c8c8; margin-top: 20px; }
.arrow.down { border-top: 6px solid #c8c8c8; margin-top: auto; margin-bottom: 7px; }

.list { width: 437px; flex: none; margin-left: 1px; }
.list-head { margin-top: 11px; height: 55px; background: #fff; border-radius: 4px 4px 0 0; border-bottom: 1px solid #e0e0e0; box-sizing: border-box; display: flex; align-items: center; padding: 3px 0 0 22px; font-size: 18.500px; }
.selectall { width: 23px; height: 23px; color: #6b6b6b; margin-right: 21px; }
.pivot { margin-right: 33px; height: 52px; line-height: 54px; box-sizing: border-box; color: #424242; }
.pivot.on { font-weight: 600; color: #242424; border-bottom: 3px solid #0f6cbd; height: 46px; align-self: flex-start; line-height: 54px; }
.filter { margin-left: auto; display: flex; align-items: center; gap: 10px; padding-right: 34px; font-size: 15.500px; color: #424242; }
.filter .ic { width: 20px; height: 20px; }
.msg { height: 101px; background: #cfe4fa; border-left: 5px solid #0f548c; box-sizing: border-box; display: flex; padding-left: 16px; }
.msg-radio { width: 22px; height: 22px; border-radius: 50%; background: #fff; border: 1px solid #7a7a7a; margin-top: 25px; flex: none; }
.msg-text { margin-left: 21px; width: 317px; padding-top: 13px; font-size: 16px; }
.msg-from { height: 25px; line-height: 25px; font-weight: 600; color: #111; }
.msg-line { height: 25px; line-height: 25px; display: flex; justify-content: space-between; color: #115ea3; font-weight: 600; }
.msg-time { font-size: 14px; }
.msg-preview { height: 25px; line-height: 25px; color: #616161; white-space: nowrap; font-size: 16.600px; }

.reading { width: 1106px; margin-left: 12px; flex: none; }
.subject-card { margin-top: 12px; height: 55px; background: #fff; border-radius: 4px; display: flex; align-items: center; padding: 0 31px 0 16px; box-shadow: 0 0 2px rgba(0, 0, 0, .08); box-sizing: border-box; }
.subject-card h1 { margin: 0; font-size: 23.300px; font-weight: 600; color: #333; white-space: nowrap; }
.subj-ic { margin-left: 22px; color: #6b6b6b; }
.small-chev { width: 12px; height: 12px; margin-left: 7px; color: #616161; }
.zoomer { margin-left: auto; color: #111; stroke-width: 1.600; }
.mail-card { margin-top: 12px; background: #fff; border: 1px solid #d1d1d1; border-radius: 4px; display: grid; grid-template-columns: 50px 1fr; column-gap: 15px; padding: 19px 27px 16px 15px; box-sizing: border-box; align-items: start; }
.avatar { width: 50px; height: 50px; border-radius: 50%; background: #cdd6d8; display: grid; place-items: center; font-size: 16px; font-weight: 600; color: #3b3b3b; }
.mail-row { display: flex; justify-content: space-between; align-items: center; height: 28px; }
.mail-row.to { margin-top: 2px; }
.sender { font-size: 18.300px; font-weight: 600; color: #0f6cbd; }
.mail-actions { display: flex; gap: 23px; color: #0f6cbd; margin-right: 1px; margin-top: -9px; }
.mail-row.meta { font-size: 16px; color: #424242; }
.date { font-size: 14.500px; color: #707070; }
.mail-body { margin-top: 12px; font-size: 17.300px; color: #000; }
.mail-body p { margin: 0; height: 24px; line-height: 24px; white-space: nowrap; }
.suggestions { margin-top: 14px; display: flex; gap: 10px; }
.suggestions button { height: 40px; border: 1px solid #0f6cbd; border-radius: 4px; background: #fff; color: #0f6cbd; font: inherit; font-size: 14px; padding: 0; white-space: nowrap; }
.replies { margin: 31px 0 0 -5px; display: flex; gap: 6px; }
.replies button { height: 39px; border: 1px solid #e0e0e0; border-radius: 4px; background: #fff; color: #424242; font: inherit; font-size: 16.500px; font-weight: 600; padding: 0 0 0 15px; display: flex; align-items: center; gap: 12px; white-space: nowrap; }
.replies button .ic { color: #0f6cbd; stroke-width: 1.100; }

/* windows taskbar */
.taskbar { background: #d4dcea; display: flex; align-items: stretch; }
.start { width: 61px; display: grid; place-items: center; background: #cdd7e8; }
.start svg { width: 22px; height: 22px; }
.ts-search { width: 428px; background: #fff; border: 1px solid #b6bec9; border-right: 1px solid #eee; box-sizing: border-box; display: flex; align-items: center; padding-left: 12px; font-size: 17.800px; color: #222; gap: 14px; }
.ts-search .ic { width: 22px; height: 22px; color: #111; stroke-width: 1.500; }
.tb-cell { width: 62px; display: flex; flex-direction: column; flex: none; }
.tb-cell.taskview { padding-right: 4px; box-sizing: border-box; }
.tb-cell.taskview svg { width: 24px; height: 24px; }
.tb-cell.edge { width: 57px; margin-right: 5px; background: #eef2f9; padding-left: 3px; box-sizing: border-box; border-right: 1px solid #c3cbd9; }
.tb-icon { flex: 1; display: grid; place-items: center; }
.tb-icon svg { width: 30px; height: 30px; }
.tb-bar { display: block; height: 3px; margin: 0 6px; background: #0078d4; }
.tb-bar.off { background: transparent; }
.tb-cell.edge .tb-bar { margin: 0 0 0 -3px; }
.tray { margin-left: auto; display: flex; align-items: center; color: #111; font-size: 16.500px; }
.weather { width: 32px; height: 32px; }
.temp { margin-left: 10px; white-space: nowrap; }
.sky { margin-left: 12px; white-space: nowrap; width: 93px; }
.tray .ic { width: 18px; height: 18px; stroke-width: 1.400; }
.tray-chev { margin-left: 21px; }
.tray-bat { margin-left: 11px; }
.tray-cloud { margin-left: 14px; color: #333; }
.tray-vol { margin-left: 12px; }
.lang { margin-left: 15px; font-size: 14px; }
.clock { width: 84px; margin-left: 12px; display: flex; flex-direction: column; align-items: center; font-size: 14px; line-height: 23px; }
.tray .tray-notif { width: 24px; height: 24px; margin: 0 30px 0 16px; stroke-width: 1.200; }
</style>
